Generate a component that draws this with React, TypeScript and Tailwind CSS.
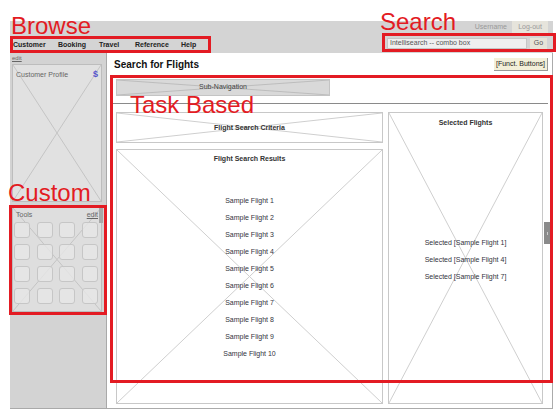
import React from "react";

const Cross = ({ color = "#cfcfcf" }: { color?: string }) => (
  <svg
    className="pointer-events-none absolute inset-0 h-full w-full"
    viewBox="0 0 100 100"
    preserveAspectRatio="none"
  >
    <line x1="0" y1="0" x2="100" y2="100" stroke={color} strokeWidth="1" vectorEffect="non-scaling-stroke" />
    <line x1="100" y1="0" x2="0" y2="100" stroke={color} strokeWidth="1" vectorEffect="non-scaling-stroke" />
  </svg>
);

const navItems = [
  { label: "Customer", w: "w-[45px]" },
  { label: "Booking", w: "w-[41px]" },
  { label: "Travel", w: "w-[36px]" },
  { label: "Reference", w: "w-[46px]" },
  { label: "Help", w: "w-[24px]" },
];

const flights = Array.from({ length: 10 }, (_, i) => `Sample Flight ${i + 1}`);
const selected = ["Selected [Sample Flight 1]", "Selected [Sample Flight 4]", "Selected [Sample Flight 7]"];

export default function App() {
  return (
    <div className="relative h-[413px] w-[559px] overflow-hidden bg-white font-['Liberation_Sans',Arial,sans-serif] text-[#333]">
      <div className="ml-[10px] mt-[21px] flex w-[543px] flex-col">
        {/* header */}
        <div className="flex h-[32px] justify-between bg-[#d4d4d4]">
          <div className="flex flex-col justify-end">
            <nav className="flex h-[15px] items-center pl-[3px] text-[7px] font-bold text-[#222]">
              {navItems.map((n) => (
                <span key={n.label} className={n.w}>
                  {n.label}
                </span>
              ))}
            </nav>
          </div>
          <div className="flex flex-col items-end pr-[5px]">
            <div className="flex h-[12px] items-center gap-[5px]">
              <span className="text-[7px] text-[#999]">Username</span>
              <span className="flex h-[12px] w-[36px] items-center justify-center bg-[#e6e4dc] text-[7px] text-[#999]">
                Log-out
              </span>
            </div>
            <div className="mt-[5px] flex items-center gap-[3px] pr-px">
              <div className="flex h-[11px] w-[140px] items-center border border-[#c6c6c6] bg-[#efefef] pl-[2px] text-[7px] text-[#555]">
                Intellisearch -- combo box
              </div>
              <div className="flex h-[11px] w-[17px] items-center justify-center bg-[#e7e4d8] text-[7px] text-[#555]">
                Go
              </div>
            </div>
          </div>
        </div>

        {/* body */}
        <div className="flex h-[356px]">
          {/* sidebar */}
          <aside className="flex w-[97px] flex-col border-b border-r border-[#a9a9a9] bg-[#d3d3d3] pl-[2px]">
            <span className="mt-[2px] h-[9px] text-[6px] leading-none text-[#666] underline">edit</span>
            <div className="relative h-[138px] w-[90px] border border-[#bdbdbd] bg-[#e1e1e1]">
              <Cross color="#c4c4c4" />
              <div className="relative flex items-center justify-between px-[3px] pt-[3px] text-[7px] text-[#666]">
                <span>Customer Profile</span>
                <span className="text-[9px] font-bold text-[#5555cc]">$</span>
              </div>
            </div>
            <div className="relative mt-[5px] h-[105px] w-[90px] border border-[#bdbdbd] bg-[#dedede]">
              <Cross color="#c4c4c4" />
              <div className="absolute right-[-2px] top-0 h-[15px] w-[4px] bg-[#a8a8a8]" />
              <div className="relative flex items-center justify-between px-[3px] pt-[2px] text-[7px] leading-[9px] text-[#666]">
                <span>Tools</span>
                <span className="underline">edit</span>
              </div>
              <div className="relative ml-[1px] mt-[3px] grid grid-cols-[repeat(4,16px)] gap-x-[6.5px] gap-y-[6px]">
                {Array.from({ length: 16 }, (_, i) => (
                  <div key={i} className="h-[16px] w-[16px] rounded-[3px] border border-[#c6c6c6] bg-[#e6e6e6]/80" />
                ))}
              </div>
            </div>
          </aside>

          {/* main */}
          <main className="relative flex flex-1 flex-col border-b border-r border-[#ababab] bg-white">
            <div className="flex items-center justify-between pl-[7px] pr-[4px] pt-[5px]">
              <h1 className="text-[10px] font-bold leading-[13px] text-[#111]">Search for Flights</h1>
              <button className="flex h-[13px] items-center border-b border-r border-[#9a9a9a] bg-[#f3efd8] px-[2px] text-[7px] text-[#222]">
                [Funct. Buttons]
              </button>
            </div>
            <div className="ml-[6px] mr-[4px] mt-[8px] border-b border-[#8a8a8a] pb-[7px]">
              <div className="relative ml-[3px] flex h-[17px] w-[214px] items-center justify-center border border-[#c4c4c4] bg-[#d9d9d9] text-[7px] text-[#444]">
                <Cross color="#bdbdbd" />
                <span className="relative">Sub-Navigation</span>
              </div>
            </div>
            <div className="ml-[9px] mt-[8px] flex gap-[5px]">
              <div className="flex w-[267px] flex-col gap-[6px]">
                <div className="relative flex h-[31px] items-center justify-center border border-[#c8c8c8] pt-px text-[7px] font-bold text-[#333]">
                  <Cross />
                  <span className="relative">Flight Search Criteria</span>
                </div>
                <div className="relative flex h-[255px] flex-col items-center border border-[#c8c8c8]">
                  <Cross />
                  <span className="relative mt-[4px] text-[7px] font-bold leading-[9px]">Flight Search Results</span>
                  <ul className="relative mt-[29px] flex flex-col items-center text-[7px] leading-[17px] text-[#33333d]">
                    {flights.map((f) => (
                      <li key={f}>{f}</li>
                    ))}
                  </ul>
                </div>
              </div>
              <div className="relative flex h-[292px] w-[155px] flex-col items-center border border-[#c8c8c8]">
                <Cross />
                <span className="relative mt-[5px] text-[7px] font-bold leading-[9px]">Selected Flights</span>
                <ul className="relative mt-[107px] flex flex-col items-center text-[7px] leading-[17px] text-[#33333d]">
                  {selected.map((f) => (
                    <li key={f}>{f}</li>
                  ))}
                </ul>
              </div>
            </div>
            <div className="absolute right-[1px] top-[169px] flex h-[22px] w-[7px] items-center justify-center bg-[#8a8a8a]">
              <span className="h-[3px] w-[1px] bg-[#ccc]" />
            </div>
          </main>
        </div>
      </div>

      {/* annotations */}
      <div className="pointer-events-none absolute left-[10px] top-[36px] h-[17px] w-[201px] border-[3px] border-[#e31b23]" />
      <div className="pointer-events-none absolute left-[382px] top-[33px] h-[19px] w-[174px] border-[3px] border-[#e31b23]" />
      <div className="pointer-events-none absolute left-[9px] top-[205px] h-[110px] w-[98px] border-[3px] border-[#e31b23]" />
      <div className="pointer-events-none absolute left-[110px] top-[75px] h-[308px] w-[443px] border-[3px] border-[#e31b23]" />
      <span className="absolute left-[11px] top-[14px] text-[24px] leading-[24px] text-[#e31b23]">Browse</span>
      <span className="absolute left-[380px] top-[10px] text-[24px] leading-[24px] text-[#e31b23]">Search</span>
      <span className="absolute left-[8px] top-[181px] text-[24px] leading-[24px] text-[#e31b23]">Custom</span>
      <span className="absolute left-[130px] top-[93px] text-[24px] leading-[24px] text-[#e31b23]">Task Based</span>
    </div>
  );
}
